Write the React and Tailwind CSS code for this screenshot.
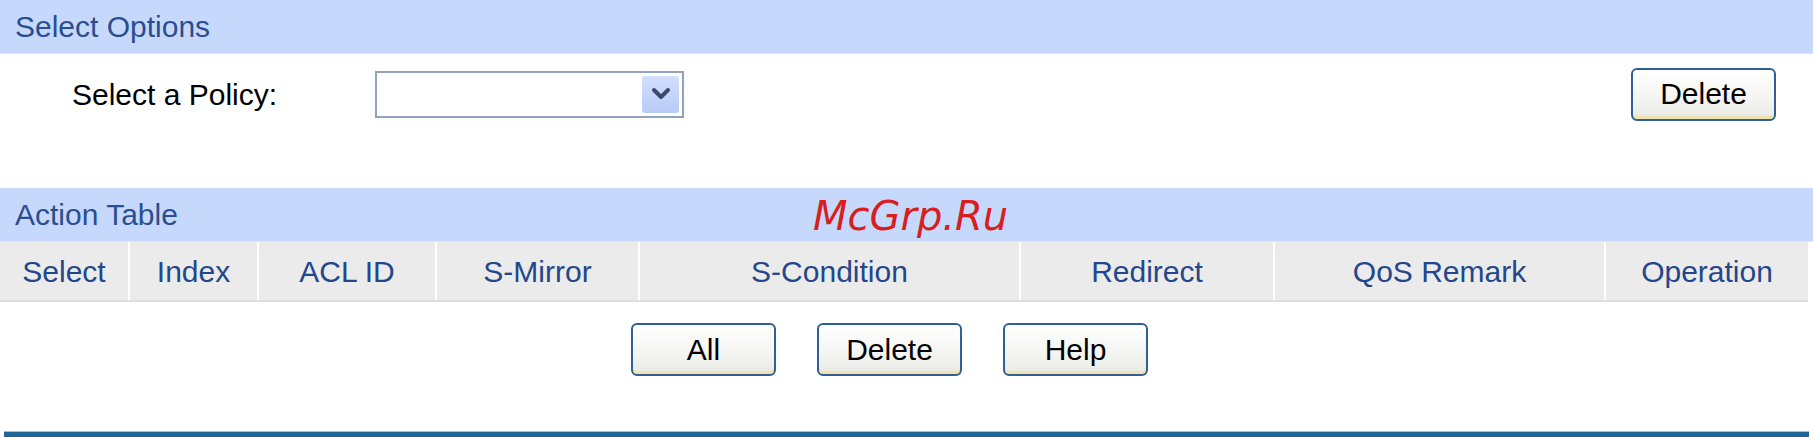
import React from "react";

const COLS = [
  { label: "Select", w: "w-[128px]" },
  { label: "Index", w: "w-[127px]" },
  { label: "ACL ID", w: "w-[176px]" },
  { label: "S-Mirror", w: "w-[201px]" },
  { label: "S-Condition", w: "w-[379px]" },
  { label: "Redirect", w: "w-[252px]" },
  { label: "QoS Remark", w: "w-[329px]" },
  { label: "Operation", w: "w-[202px]" },
];

function XpButton({ children }) {
  return (
    <button className="w-[145px] h-[53px] rounded-[6px] border-2 border-[#2f6196] bg-gradient-to-b from-white via-[#f6f6f4] to-[#e9e9e4] text-black text-[30px] leading-none shadow-[inset_0_-3px_0_#f2e2b0]">
      {children}
    </button>
  );
}

function SectionHead({ title }) {
  return (
    <div className="h-[54px] bg-[#c6d9fd] border-b border-[#dde8fe] flex items-center pl-[15px] text-[30px] text-[#2b4e92]">
      {title}
    </div>
  );
}

export default function App() {
  return (
    <div
      className="relative w-[1813px] h-[437px] bg-white overflow-hidden"
      style={{ fontFamily: '"Liberation Sans", Arial, sans-serif' }}
    >
      <SectionHead title="Select Options" />

      {/* policy row */}
      <div className="h-[134px] pt-[13px]">
        <div className="flex items-center h-[54px]">
          <div className="w-[375px] pl-[72px] text-[30px] text-black">Select a Policy:</div>
          <div className="w-[309px] h-[47px] border-2 border-[#8fa3bd] bg-white flex items-center justify-end pr-[3px]">
            <div className="w-[37px] h-[37px] rounded-[3px] bg-gradient-to-b from-[#d2defd] to-[#b8cbf7] flex items-center justify-center">
              <svg width="20" height="14" viewBox="0 0 20 14">
                <path d="M3 3 L10 10 L17 3" fill="none" stroke="#3b4a6b" strokeWidth="4" strokeLinecap="round" strokeLinejoin="round" />
              </svg>
            </div>
          </div>
          <div className="ml-auto mr-[37px]">
            <XpButton>Delete</XpButton>
          </div>
        </div>
      </div>

      <SectionHead title="Action Table" />

      {/* table header */}
      <div className="flex gap-[2px] w-[1808px] border-b-2 border-[#dedede]">
        {COLS.map((c) => (
          <div
            key={c.label}
            className={`${c.w} h-[58px] bg-[#ebebeb] flex items-center justify-center text-[30px] text-[#23478a]`}
          >
            {c.label}
          </div>
        ))}
      </div>

      {/* buttons */}
      <div className="flex gap-[41px] pl-[631px] pt-[21px]">
        <XpButton>All</XpButton>
        <XpButton>Delete</XpButton>
        <XpButton>Help</XpButton>
      </div>

      <div className="absolute left-[4px] right-[4px] bottom-0 h-[6px] bg-[#236496] border-t border-[#9fbcd6]" />

      {/* watermark */}
      <div
        className="absolute left-[813px] top-[196px] text-[40px] italic text-[#d71f1f] leading-none"
        style={{ fontFamily: '"DejaVu Sans", sans-serif' }}
      >
        McGrp.Ru
      </div>
    </div>
  );
}
